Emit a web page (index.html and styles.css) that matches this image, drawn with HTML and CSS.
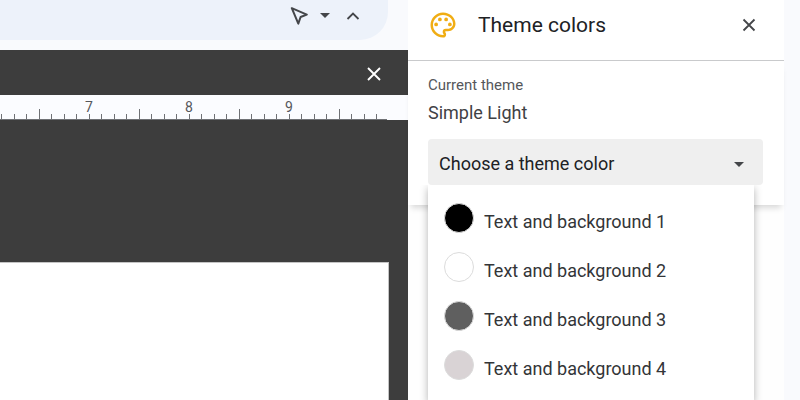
FILE: index.html
```html
<!DOCTYPE html>
<html lang="en">
<head>
  <meta charset="UTF-8">
  <meta name="viewport" content="width=device-width, initial-scale=1.0">
  <title>Theme colors</title>
  <link rel="stylesheet" href="styles.css">
</head>
<body>
  <main class="editor">
    <div class="toolbar">
      <div class="toolbar-pill">
        <button class="icon-button" aria-label="Pointer">
          <svg width="20" height="20" viewBox="0 0 20 20"><path d="M3.800 2.200 L18.800 8.600 L12.600 11 L10.300 17.600 Z" fill="none" stroke="#444649" stroke-width="2" stroke-linejoin="round"/></svg>
        </button>
        <button class="icon-button" aria-label="Pointer options">
          <svg width="14" height="20" viewBox="0 0 14 20"><path d="M0 7h10l-5 5z" fill="#444649"/></svg>
        </button>
        <button class="icon-button" aria-label="Hide the menus">
          <svg width="14" height="20" viewBox="0 0 14 20"><path d="M1.500 13 L7 7.500 L12.500 13" fill="none" stroke="#444649" stroke-width="1.800"/></svg>
        </button>
      </div>
    </div>
    <div class="theme-bar">
      <button class="icon-button" aria-label="Close theme builder">
        <svg width="14" height="14" viewBox="0 0 14 14"><path d="M1 1l12 12M13 1L1 13" stroke="#fff" stroke-width="1.900"/></svg>
      </button>
    </div>
    <div class="ruler">
      <div class="ruler-numbers">
        <span>7</span>
        <span>8</span>
        <span>9</span>
      </div>
      <svg class="ruler-ticks" height="11">
        <defs>
          <pattern id="inch" x="39" y="0" width="100" height="11" patternUnits="userSpaceOnUse">
            <path d="M.5 0v10" stroke="#6f7175"/>
            <path d="M12.500 5v5M25.500 5v5M37.500 5v5M50.500 5v5M62.500 5v5M75.500 5v5M87.500 5v5" stroke="#6f7175"/>
          </pattern>
        </defs>
        <rect width="100%" height="11" fill="url(#inch)"/>
        <path d="M0 10.500h2000" stroke="#6f7175"/>
      </svg>
    </div>
    <div class="canvas">
      <div class="slide"></div>
    </div>
  </main>

  <aside class="sidebar">
    <header class="sidebar-header">
      <svg width="30" height="30" viewBox="0 0 24 24" fill="#f0ad14">
        <path d="M12 22C6.490 22 2 17.510 2 12S6.490 2 12 2s10 4.040 10 9c0 3.310-2.690 6-6 6h-1.770c-.28 0-.5.22-.5.5 0 .12.05.23.13.33.41.47.64 1.060.64 1.670A2.500 2.500 0 0 1 12 22zm0-18c-4.410 0-8 3.590-8 8s3.590 8 8 8c.28 0 .5-.22.5-.5a.54.54 0 0 0-.14-.35c-.41-.46-.63-1.050-.63-1.650a2.500 2.500 0 0 1 2.500-2.500H16c2.210 0 4-1.790 4-4 0-3.860-3.590-7-8-7z"/>
        <circle cx="6.500" cy="11.500" r="1.500"/>
        <circle cx="9.500" cy="7.500" r="1.500"/>
        <circle cx="14.500" cy="7.500" r="1.500"/>
        <circle cx="17.500" cy="11.500" r="1.500"/>
      </svg>
      <h1>Theme colors</h1>
      <button class="icon-button" aria-label="Close">
        <svg width="14" height="14" viewBox="0 0 14 14"><path d="M1.500 1.500l11 11M12.500 1.500l-11 11" stroke="#444649" stroke-width="1.800"/></svg>
      </button>
    </header>
    <section class="theme-card">
      <p class="caption">Current theme</p>
      <p class="theme-name">Simple Light</p>
      <div class="picker">
        <select aria-label="Theme color">
          <option>Choose a theme color</option>
        </select>
        <svg class="picker-arrow" width="10" height="5" viewBox="0 0 10 5"><path d="M0 0h10l-5 5z" fill="#444649"/></svg>
        <div class="menu">
          <button class="menu-item"><span class="swatch black"></span><span class="label">Text and background 1</span></button>
          <button class="menu-item"><span class="swatch white"></span><span class="label">Text and background 2</span></button>
          <button class="menu-item"><span class="swatch gray"></span><span class="label">Text and background 3</span></button>
          <button class="menu-item"><span class="swatch light"></span><span class="label">Text and background 4</span></button>
        </div>
      </div>
    </section>
  </aside>
</body>
</html>
```
FILE: styles.css
```css
* {
  box-sizing: border-box;
}

body {
  margin: 0;
  padding-right: 16px;
  display: grid;
  grid-template-columns: 1fr 376px;
  height: 100vh;
  overflow: hidden;
  background-color: #f9fafd;
  font-family: Roboto, sans-serif;
  color: #202124;
}

p, h1 {
  margin: 0;
}

.icon-button {
  display: flex;
  padding: 0;
  border: none;
  background: none;
  cursor: pointer;
}

.editor {
  display: flex;
  flex-direction: column;
  min-width: 0;
}

.toolbar {
  padding: 0 20px 10px 0;
}

.toolbar-pill {
  display: flex;
  justify-content: flex-end;
  gap: 12px;
  height: 40px;
  padding: 6px 28px 0 0;
  border-bottom-right-radius: 28px;
  background-color: #edf2fa;
}

.toolbar-pill .icon-button {
  align-items: flex-start;
}

.theme-bar {
  display: flex;
  justify-content: flex-end;
  align-items: center;
  height: 45px;
  padding: 2px 27px 0 0;
  background-color: #3d3d3d;
}

.ruler {
  padding: 3px 21px 0 0;
  background-color: #fbfcff;
}

.ruler-numbers {
  display: flex;
  height: 11px;
  padding-left: 39px;
  font-size: 14px;
  line-height: 18px;
  color: #55575b;
}

.ruler-numbers span {
  flex: 0 0 100px;
  text-align: center;
}

.ruler-ticks {
  display: block;
  width: 100%;
}

.canvas {
  flex: 1;
  display: flex;
  padding: 142px 19px 0 0;
  background-color: #3d3d3d;
}

.slide {
  flex: 1;
  border: 1px solid #c4c4c4;
  border-width: 1px 1px 0 0;
  background-color: #fff;
}

.sidebar {
  background-color: #fefefe;
}

.sidebar-header {
  display: flex;
  align-items: center;
  gap: 20px;
  height: 61px;
  padding: 0 28px 10px 20px;
  border-bottom: 1px solid #c9cacc;
  background-color: #fff;
}

.sidebar-header h1 {
  flex: 1;
  font-size: 21px;
  font-weight: 400;
  line-height: 24px;
}

.theme-card {
  padding: 14px 21px 20px 20px;
  background-color: #fff;
  box-shadow: 0 6px 6px -3px rgba(0, 0, 0, 0.15);
}

.caption {
  font-size: 15px;
  line-height: 20px;
  color: #55575b;
}

.theme-name {
  margin-bottom: 14px;
  padding-top: 6px;
  font-size: 18px;
  line-height: 24px;
  color: #3f4145;
}

.picker {
  position: relative;
}

.picker select {
  display: block;
  width: 100%;
  height: 46px;
  padding: 3px 40px 0 11px;
  border: none;
  border-radius: 4px;
  appearance: none;
  background-color: #efefef;
  color: #202124;
  font-family: inherit;
  font-size: 18px;
}

.picker-arrow {
  position: absolute;
  top: 23px;
  right: 19px;
  pointer-events: none;
}

.menu {
  position: absolute;
  top: 100%;
  left: 0;
  right: 9px;
  padding: 10px 0;
  background-color: #fff;
  box-shadow: 0 3px 8px rgba(0, 0, 0, 0.3);
  clip-path: inset(0 -16px -16px -16px);
}

.menu-item {
  display: flex;
  align-items: center;
  gap: 10px;
  width: 100%;
  height: 49px;
  padding: 0 16px 3px;
  border: none;
  background: none;
  color: #333538;
  font-family: inherit;
  font-size: 18px;
  text-align: left;
  cursor: pointer;
}

.menu-item .label {
  padding-top: 6px;
}

.swatch {
  width: 30px;
  height: 30px;
  border: 1px solid #dcdcdc;
  border-radius: 50%;
}

.black {
  background-color: #000;
}

.white {
  background-color: #fff;
}

.gray {
  background-color: #5f5f5f;
}

.light {
  background-color: #d9d3d5;
}
```
